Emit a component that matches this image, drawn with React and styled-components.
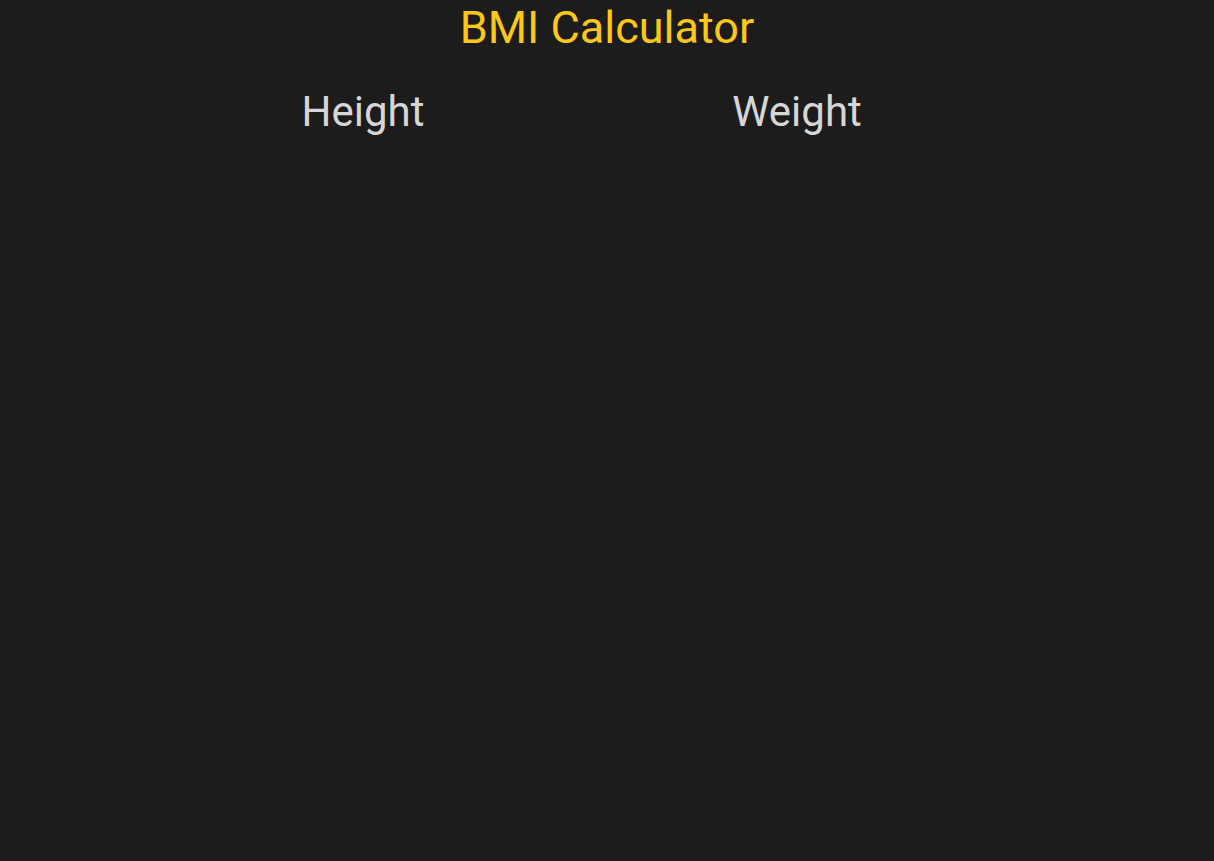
import React from "react";
import styled, { createGlobalStyle } from "styled-components";

const GlobalStyle = createGlobalStyle`
  html, body {
    margin: 0;
    padding: 0;
    background: #1c1c1c;
    font-family: Roboto, "Liberation Sans", sans-serif;
  }
  body {
    min-height: 100vh;
  }
`;

const Page = styled.div`
  min-height: 100vh;
  background: #1c1c1c;
`;

const Title = styled.h1`
  margin: 0;
  padding-top: 3px;
  text-align: center;
  font-size: 45px;
  font-weight: 400;
  line-height: 50px;
  color: #fcc817;
`;

const Controls = styled.div`
  display: flex;
  justify-content: center;
  gap: 80px;
  margin-top: 34px;
`;

const Column = styled.div`
  width: ${props => props.width}px;
  display: flex;
  flex-direction: column;
  align-items: center;
`;

const Label = styled.h2`
  margin: 0;
  font-size: 42px;
  font-weight: 400;
  line-height: 50px;
  color: #d6d6d6;
`;

export default function App() {
	return (
		<Page>
			<GlobalStyle />
			<Title>BMI Calculator</Title>
			<Controls>
				<Column width={300}>
					<Label>Height</Label>
				</Column>
				<Column width={408}>
					<Label>Weight</Label>
				</Column>
			</Controls>
		</Page>
	);
}
